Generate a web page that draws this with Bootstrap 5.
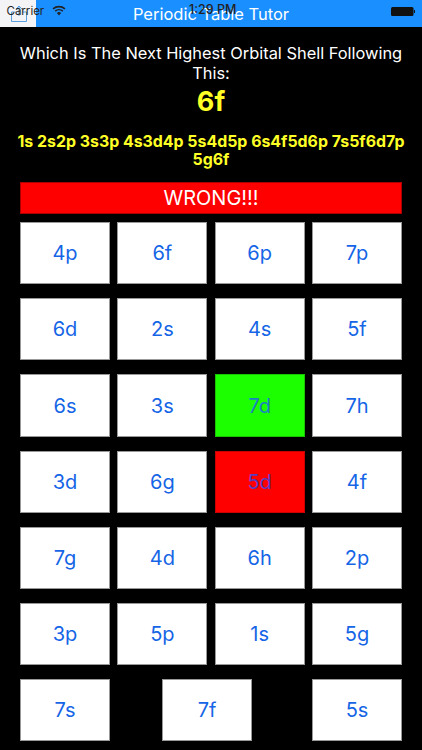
<!DOCTYPE html>
<html lang="en">
<head>
<meta charset="utf-8">
<meta name="viewport" content="width=device-width, initial-scale=1">
<link href="https://cdn.jsdelivr.net/npm/bootstrap@5.3.0/dist/css/bootstrap.min.css" rel="stylesheet">
<style>
html,body{height:750px;overflow:hidden;background:#000;font-family:Inter,"Liberation Sans",sans-serif}
.topbar{height:27px;background:#1a8fff;color:#fff;font-size:16.5px;line-height:29px}
.topleft{left:0;top:0;width:36px;height:27px;background:#f4f4f6}
.trayicon{left:11px;top:5px}
.carrier{left:6.5px;top:3px;font-size:11.5px;line-height:16px;color:#222}
.wifi{left:52px;top:5px}
.clock{left:189px;top:2px;font-size:12.5px;line-height:16px;color:#222;font-weight:500}
.batt{left:391px;top:7px;width:24px;height:9px}
.prompt{padding:16px 14px 0;color:#fff;font-size:16.4px;line-height:20px}
.shell{color:#ffff26;font-weight:700;font-size:27px;line-height:30px;margin-top:4px}
.seq{color:#ffff26;font-weight:700;font-size:15.9px;line-height:17.5px;margin-top:16px;padding:0 14px}
.board{padding:0 20px}
.verdict{height:32px;margin-top:14px;background:#fe0000;color:#fff;font-size:20px;line-height:30px;border:1px solid #a00}
.cells{margin-top:8px;row-gap:13.9px}
.cellrow{justify-content:space-between}
.pick{width:90px;height:62.3px;padding:0;border-radius:0;border:1px solid #999;background:#fff;color:#1565e6;font-size:20px;line-height:1}
.pick.right{background:#1bff00;border-color:#19c400;color:#1c7ec4}
.pick.bad{background:#ff0000;border-color:#c00;color:#5a3cc0}
.pick.shifted{margin-right:8px}
</style>
</head>
<body>
<div class="topbar position-relative text-center">Periodic Table Tutor
  <div class="topleft position-absolute"></div>
  <svg class="trayicon position-absolute" width="16" height="18" viewBox="0 0 16 18" fill="none" stroke="#5a9fe0" stroke-width="1"><path d="M4.5 7H.5v9.5h15V7h-4M8 11V1M5 4l3-3 3 3"/></svg>
  <span class="carrier position-absolute">Carrier</span>
  <svg class="wifi position-absolute" width="14" height="11" viewBox="0 0 14 11" fill="#222"><path d="M7 10.500 4.900 8a3 3 0 0 1 4.200 0zM3.700 6.800l-1-1.200a6.500 6.500 0 0 1 8.600 0l-1 1.200a5 5 0 0 0-6.600 0zM1.600 4.400.5 3.200a10 10 0 0 1 13 0l-1.100 1.200a8.300 8.300 0 0 0-10.800 0z"/></svg>
  <span class="clock position-absolute">1:29 PM</span>
  <svg class="batt position-absolute" viewBox="0 0 24 9" fill="#111"><rect width="22.500" height="9" rx="1.500"/><rect x="23" y="3" width="1" height="3"/></svg>
</div>
<div class="prompt text-center">Which Is The Next Highest Orbital Shell Following This:
  <div class="shell">6f</div>
</div>
<div class="seq text-center">1s 2s2p 3s3p 4s3d4p 5s4d5p 6s4f5d6p 7s5f6d7p 5g6f</div>
<div class="board">
  <div class="verdict text-center">WRONG!!!</div>
  <div class="cells d-flex flex-column">
    <div class="cellrow d-flex"><button class="pick btn">4p</button><button class="pick btn">6f</button><button class="pick btn">6p</button><button class="pick btn">7p</button></div>
    <div class="cellrow d-flex"><button class="pick btn">6d</button><button class="pick btn">2s</button><button class="pick btn">4s</button><button class="pick btn">5f</button></div>
    <div class="cellrow d-flex"><button class="pick btn">6s</button><button class="pick btn">3s</button><button class="pick btn right">7d</button><button class="pick btn">7h</button></div>
    <div class="cellrow d-flex"><button class="pick btn">3d</button><button class="pick btn">6g</button><button class="pick btn bad">5d</button><button class="pick btn">4f</button></div>
    <div class="cellrow d-flex"><button class="pick btn">7g</button><button class="pick btn">4d</button><button class="pick btn">6h</button><button class="pick btn">2p</button></div>
    <div class="cellrow d-flex"><button class="pick btn">3p</button><button class="pick btn">5p</button><button class="pick btn">1s</button><button class="pick btn">5g</button></div>
    <div class="cellrow d-flex"><button class="pick btn">7s</button><button class="pick btn shifted">7f</button><button class="pick btn">5s</button></div>
  </div>
</div>
</body>
</html>
